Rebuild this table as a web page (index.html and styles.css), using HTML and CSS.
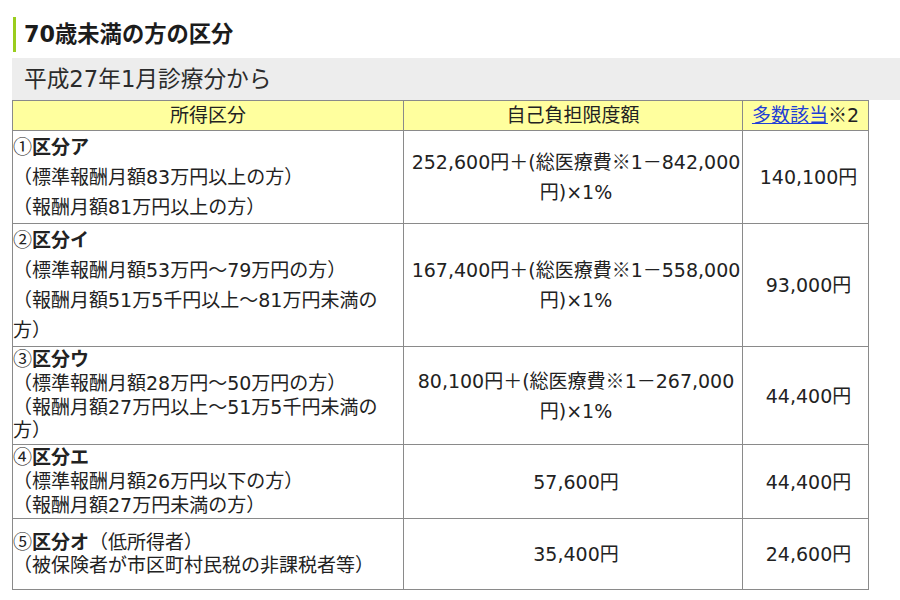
FILE: index.html
```html
<!DOCTYPE html>
<html lang="ja">
<head>
<meta charset="utf-8">
<title>70歳未満の方の区分</title>
<link rel="stylesheet" href="styles.css">
</head>
<body>
<div class="page">
  <h2 class="ttl">70歳未満の方の区分</h2>
  <h3 class="band">平成27年1月診療分から</h3>
  <table class="tbl">
    <colgroup><col class="c1"><col class="c2"><col class="c3"></colgroup>
    <thead>
      <tr><th>所得区分</th><th>自己負担限度額</th><th><a href="#" class="lnk">多数該当</a><span class="j">※</span>2</th></tr>
    </thead>
    <tbody>
      <tr class="wide">
        <td class="cat"><span class="j">①</span><b>区分ア</b><br>（標準報酬月額83万円以上の方）<br>（報酬月額81万円以上の方）</td>
        <td class="amt">252,600円＋(総医療費<span class="j">※</span>1－842,000円)×1%</td>
        <td class="amt">140,100円</td>
      </tr>
      <tr class="wide">
        <td class="cat"><span class="j">②</span><b>区分イ</b><br>（標準報酬月額53万円～79万円の方）<br>（報酬月額51万5千円以上～81万円未満の方）</td>
        <td class="amt">167,400円＋(総医療費<span class="j">※</span>1－558,000円)×1%</td>
        <td class="amt">93,000円</td>
      </tr>
      <tr class="tight">
        <td class="cat"><span class="j">③</span><b>区分ウ</b><br>（標準報酬月額28万円～50万円の方）<br>（報酬月額27万円以上～51万5千円未満の方）</td>
        <td class="amt">80,100円＋(総医療費<span class="j">※</span>1－267,000円)×1%</td>
        <td class="amt">44,400円</td>
      </tr>
      <tr class="tight">
        <td class="cat"><span class="j">④</span><b>区分エ</b><br>（標準報酬月額26万円以下の方）<br>（報酬月額27万円未満の方）</td>
        <td class="amt">57,600円</td>
        <td class="amt">44,400円</td>
      </tr>
      <tr class="tight last">
        <td class="cat"><span class="j">⑤</span><b>区分オ</b>（低所得者）<br>（被保険者が市区町村民税の非課税者等）</td>
        <td class="amt">35,400円</td>
        <td class="amt">24,600円</td>
      </tr>
    </tbody>
  </table>
</div>
</body>
</html>
```

FILE: styles.css
```css
html, body {
  margin: 0;
  padding: 0;
  background: #ffffff;
}

body {
  font-family: "DejaVu Sans", "Noto Sans CJK JP", sans-serif;
  color: #222222;
}

.page {
  padding: 17px 0 0 12px;
}

.j {
  font-family: "Noto Sans CJK JP", sans-serif;
  line-height: 1;
}

.ttl {
  margin: 0 0 6px 1px;
  height: 35px;
  line-height: 35px;
  border-left: 3px solid #9acd1e;
  padding-left: 8px;
  font-size: 22.3px;
  font-weight: bold;
  color: #1c1c1c;
}

.band {
  margin: 0;
  width: 876px;
  height: 42px;
  line-height: 42px;
  padding-left: 12px;
  background: #ededed;
  font-size: 22.7px;
  font-weight: normal;
  color: #2b2b2b;
}

.tbl {
  border-collapse: collapse;
  table-layout: fixed;
  width: 856px;
  font-size: 19px;
}

.c1 { width: 391px; }
.c2 { width: 339px; }
.c3 { width: 126px; }

.tbl th,
.tbl td {
  border: 1px solid #8a8a8a;
  padding: 0;
}

.tbl th {
  background: #ffff9e;
  font-weight: normal;
  text-align: center;
  line-height: 29px;
  height: 29px;
  color: #222222;
}

.lnk {
  color: #1f3fd6;
  text-decoration: underline;
}

.cat {
  text-align: left;
  vertical-align: middle;
  padding: 1px 0 !important;
}

.cat b {
  font-weight: bold;
}

.wide .cat {
  line-height: 30px;
}

.tight .cat {
  line-height: 23.75px;
}

.last .cat {
  padding: 11.25px 0 !important;
}

.amt {
  text-align: center;
  vertical-align: middle;
  line-height: 30px;
  padding-left: 6px !important;
}
```
